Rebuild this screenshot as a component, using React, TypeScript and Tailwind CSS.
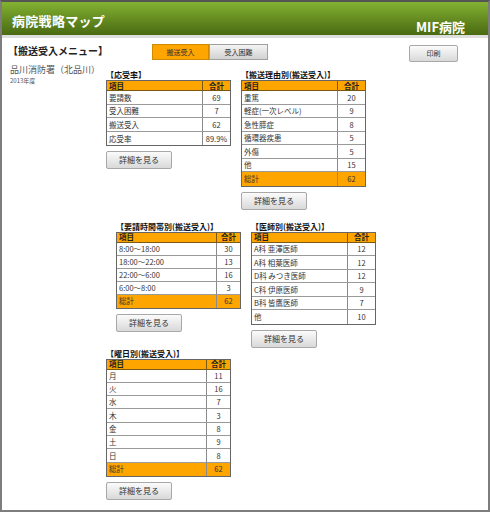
import React from "react";

const FONT = { fontFamily: '"Noto Sans CJK JP", "Noto Sans", sans-serif' };

type Row = [string, string];

function DataTable({
  title,
  rows,
  total,
  numW = 27,
  rowH = 13.5,
}: {
  title: string;
  rows: Row[];
  total?: string;
  numW?: number;
  rowH?: number;
}) {
  const cellRow = (r: Row, i: number, isTotal = false, last = false) => (
    <div
      key={i}
      className={`flex ${isTotal ? "bg-[#ffa500]" : "bg-white"} ${last ? "" : "border-b border-[#9a9a9a]"}`}
      style={{ height: rowH }}
    >
      <div className="flex-1 flex items-center pl-[2px] text-[7.5px] leading-none text-[#333] border-r border-[#8a8a8a]">
        {r[0]}
      </div>
      <div
        className="flex items-center justify-center text-[7.5px] leading-none text-[#333]"
        style={{ width: numW }}
      >
        {r[1]}
      </div>
    </div>
  );
  const all: Row[] = total ? [...rows, ["総計", total]] : rows;
  return (
    <div className="w-[125px] flex flex-col">
      <div className="h-[10px] flex items-center text-[8px] font-bold leading-none text-[#111]">{title}</div>
      <div className="border border-[#666] flex flex-col">
        <div className="h-[10px] flex bg-[#ffa500] border-b border-[#7a5a10]">
          <div className="flex-1 flex items-center pl-[2px] text-[7.5px] font-bold leading-none text-[#222] border-r border-[#7a5a10]">
            項目
          </div>
          <div
            className="flex items-center justify-center text-[7.5px] font-bold leading-none text-[#222]"
            style={{ width: numW }}
          >
            合計
          </div>
        </div>
        {all.map((r, i) => cellRow(r, i, !!total && i === all.length - 1, i === all.length - 1))}
      </div>
      <button className="mt-[5px] w-[66px] h-[18px] rounded-[2px] border border-[#a8a8a8] bg-gradient-to-b from-[#fbfbfb] to-[#d9d9d9] text-[8px] leading-none text-[#333] flex items-center justify-center">
        詳細を見る
      </button>
    </div>
  );
}

export default function App() {
  return (
    <div style={FONT} className="w-[490px] h-[512px] bg-white border-2 border-[#7d7d7d] border-t-[#555] flex flex-col">
      <div className="h-[33px] bg-gradient-to-b from-[#83b232] to-[#4a6a12] flex justify-between items-stretch px-[10px]">
        <div className="text-white text-[13px] font-bold leading-none tracking-[0.3px] pt-[12px]">病院戦略マップ</div>
        <div className="text-white text-[13px] font-bold leading-none pt-[18px] pr-[13px]">MIF病院</div>
      </div>
      <div className="h-[3px] bg-[#dedede]" />
      <div className="flex flex-1">
        <div className="w-[104px] pl-[6px] pt-[7px] flex flex-col">
          <div className="text-[10px] font-bold leading-none text-[#222] h-[12px] flex items-center">【搬送受入メニュー】</div>
          <div className="mt-[7px] text-[9px] leading-none text-[#555] h-[10px] flex items-center pl-[2px]">品川消防署（北品川）</div>
          <div className="mt-[4px] text-[6px] leading-none text-[#555] pl-[2px]">2013年度</div>
        </div>
        <div className="flex-1 flex flex-col">
          <div className="mt-[6px] h-[16px] flex items-start">
            <div className="ml-[46px] flex">
              <div className="w-[57px] h-[16px] bg-[#ffa500] border border-[#d08a00] flex items-center justify-center text-[7px] leading-none text-[#333]">
                搬送受入
              </div>
              <div className="w-[59px] h-[16px] bg-gradient-to-b from-[#f4f4f4] to-[#d2d2d2] border border-[#a0a0a0] flex items-center justify-center text-[7px] leading-none text-[#333]">
                受入困難
              </div>
            </div>
            <button className="ml-auto mr-[30px] mt-[1px] w-[49px] h-[17px] rounded-[2px] border border-[#a8a8a8] bg-gradient-to-b from-[#fbfbfb] to-[#d9d9d9] text-[7px] leading-none text-[#333] flex items-center justify-center">
              印刷
            </button>
          </div>
          <div className="mt-[10px] flex gap-[10px] items-start">
            <DataTable
              title="【応受率】"
              rows={[
                ["要請数", "69"],
                ["受入困難", "7"],
                ["搬送受入", "62"],
                ["応受率", "89.9%"],
              ]}
            />
            <DataTable
              title="【搬送理由別(搬送受入)】"
              rows={[
                ["重篤", "20"],
                ["軽症(一次レベル)", "9"],
                ["急性膵症", "8"],
                ["循環器疾患", "5"],
                ["外傷", "5"],
                ["他", "15"],
              ]}
              total="62"
            />
          </div>
          <div className="mt-[12px] pl-[10px] flex gap-[10px] items-start">
            <DataTable
              title="【要請時間帯別(搬送受入)】"
              numW={23}
              rowH={13}
              rows={[
                ["8:00～18:00", "30"],
                ["18:00～22:00", "13"],
                ["22:00～6:00", "16"],
                ["6:00～8:00", "3"],
              ]}
              total="62"
            />
            <DataTable
              title="【医師別(搬送受入)】"
              rows={[
                ["A科 亜澤医師", "12"],
                ["A科 相葉医師", "12"],
                ["D科 みつき医師", "12"],
                ["C科 伊原医師", "9"],
                ["B科 皆鷹医師", "7"],
                ["他", "10"],
              ]}
            />
          </div>
          <div className="mt-[1px] flex">
            <DataTable
              title="【曜日別(搬送受入)】"
              numW={23}
              rowH={13.3}
              rows={[
                ["月", "11"],
                ["火", "16"],
                ["水", "7"],
                ["木", "3"],
                ["金", "8"],
                ["土", "9"],
                ["日", "8"],
              ]}
              total="62"
            />
          </div>
        </div>
      </div>
    </div>
  );
}
